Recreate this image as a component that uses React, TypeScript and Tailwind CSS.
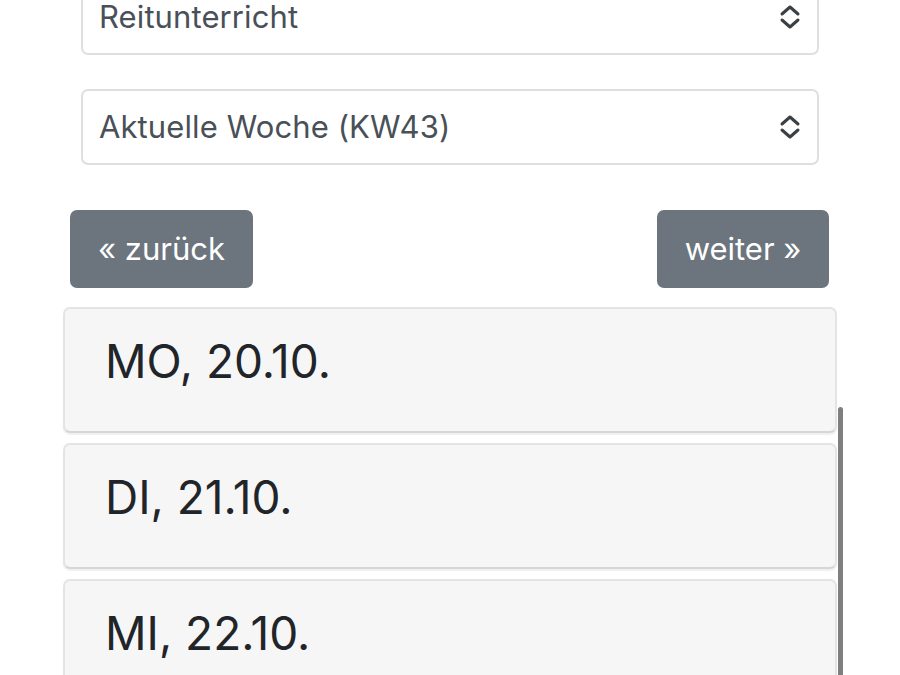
import React from "react";

function Chevrons() {
  return (
    <svg width="22" height="26" viewBox="0 0 22 26" fill="none" stroke="#3a3f44" strokeWidth="3" strokeLinecap="round" strokeLinejoin="round">
      <path d="M3 10 L11 3 L19 10" />
      <path d="M3 16 L11 23 L19 16" />
    </svg>
  );
}

function Select({ label }: { label: string }) {
  return (
    <div className="flex h-[76px] items-center justify-between rounded-[7px] border-2 border-[#dde0e3] bg-white pl-[16px] pr-[16px]">
      <span className="text-[31px] tracking-[0.1px] text-[#495057]">{label}</span>
      <Chevrons />
    </div>
  );
}

function Day({ label }: { label: string }) {
  return (
    <div className="h-[126px] rounded-[7px] border-2 border-[#e4e4e4] border-b-[#d6d6d6] bg-[#f6f6f6] pl-[40px] pt-[24px] shadow-[0_2px_1px_rgba(0,0,0,0.06)]">
      <span className="text-[46px] leading-[56px] text-[#212529]">{label}</span>
    </div>
  );
}

export default function App() {
  return (
    <div className="relative h-[675px] w-[900px] overflow-hidden bg-white" style={{ fontFamily: "Inter, 'Liberation Sans', sans-serif" }}>
      <div className="-mt-[21px] flex flex-col px-[63px]">
        <div className="flex flex-col gap-[34px] px-[18px]">
          <Select label="Reitunterricht" />
          <Select label="Aktuelle Woche (KW43)" />
        </div>
        <div className="mt-[45px] flex justify-between pl-[7px] pr-[8px]">
          <button className="flex h-[78px] w-[183px] items-center justify-center rounded-[7px] bg-[#6c757d] text-[31px] text-white">« zurück</button>
          <button className="flex h-[78px] w-[172px] items-center justify-center rounded-[7px] bg-[#6c757d] text-[31px] text-white">weiter »</button>
        </div>
        <div className="mt-[19px] flex flex-col gap-[10px]">
          <Day label="MO, 20.10." />
          <Day label="DI, 21.10." />
          <Day label="MI, 22.10." />
        </div>
      </div>
      <div className="absolute left-[838px] top-[407px] h-[280px] w-[5px] rounded-full bg-[#7f7f7f]" />
    </div>
  );
}
